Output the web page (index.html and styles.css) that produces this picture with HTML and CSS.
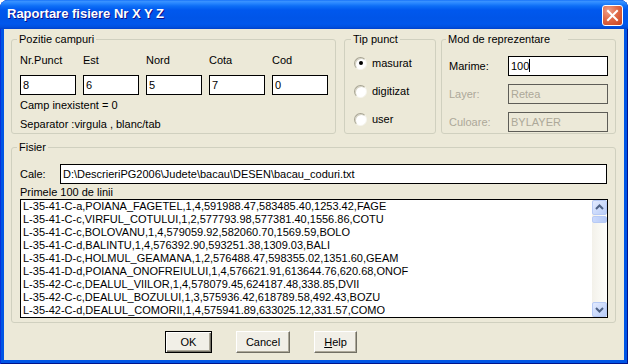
FILE: index.html
```html
<!DOCTYPE html>
<html lang="ro">
<head>
    <meta charset="UTF-8">
    <title>Raportare fisiere Nr X Y Z</title>
    <link rel="stylesheet" href="styles.css">
</head>
<body>
    <div class="window">
        <div class="titlebar">
            <span class="title">Raportare fisiere Nr X Y Z</span>
            <div class="close">
                <svg width="19" height="19" viewBox="0 0 19 19">
                    <path d="M5 5 L14 14 M14 5 L5 14" stroke="#fff" stroke-width="2" stroke-linecap="square"/>
                </svg>
            </div>
        </div>

        <div class="client">
            <div class="top-row">
                <fieldset class="group pozitie">
                    <legend>Pozitie campuri</legend>
                    <div class="fields">
                        <div class="field"><span>Nr.Punct</span><div class="edit">8</div></div>
                        <div class="field"><span>Est</span><div class="edit">6</div></div>
                        <div class="field"><span>Nord</span><div class="edit">5</div></div>
                        <div class="field"><span>Cota</span><div class="edit">7</div></div>
                        <div class="field"><span>Cod</span><div class="edit">0</div></div>
                    </div>
                    <p class="note">Camp inexistent = 0</p>
                    <p class="note second">Separator :virgula , blanc/tab</p>
                </fieldset>

                <fieldset class="group tip">
                    <legend>Tip punct</legend>
                    <div class="radio-row"><span class="radio checked"></span>masurat</div>
                    <div class="radio-row"><span class="radio"></span>digitizat</div>
                    <div class="radio-row"><span class="radio"></span>user</div>
                </fieldset>

                <fieldset class="group mod">
                    <legend class="wide">Mod de reprezentare</legend>
                    <div class="row"><span class="row-label">Marime:</span><div class="edit wide-edit">100<span class="caret"></span></div></div>
                    <div class="row disabled"><span class="row-label">Layer:</span><div class="edit wide-edit">Retea</div></div>
                    <div class="row disabled"><span class="row-label">Culoare:</span><div class="edit wide-edit">BYLAYER</div></div>
                </fieldset>
            </div>

            <fieldset class="group fisier">
                <legend>Fisier</legend>
                <div class="cale-row">
                    <span class="cale-label">Cale:</span>
                    <div class="edit cale-edit">D:\DescrieriPG2006\Judete\bacau\DESEN\bacau_coduri.txt</div>
                </div>
                <p class="list-title">Primele 100 de linii</p>
                <div class="list">
                    <div class="lines">
                        <div>L-35-41-C-a,POIANA_FAGETEL,1,4,591988.47,583485.40,1253.42,FAGE</div>
                        <div>L-35-41-C-c,VIRFUL_COTULUI,1,2,577793.98,577381.40,1556.86,COTU</div>
                        <div>L-35-41-C-c,BOLOVANU,1,4,579059.92,582060.70,1569.59,BOLO</div>
                        <div>L-35-41-C-d,BALINTU,1,4,576392.90,593251.38,1309.03,BALI</div>
                        <div>L-35-41-D-c,HOLMUL_GEAMANA,1,2,576488.47,598355.02,1351.60,GEAM</div>
                        <div>L-35-41-D-d,POIANA_ONOFREIULUI,1,4,576621.91,613644.76,620.68,ONOF</div>
                        <div>L-35-42-C-c,DEALUL_VIILOR,1,4,578079.45,624187.48,338.85,DVII</div>
                        <div>L-35-42-C-c,DEALUL_BOZULUI,1,3,575936.42,618789.58,492.43,BOZU</div>
                        <div>L-35-42-C-d,DEALUL_COMORII,1,4,575941.89,633025.12,331.57,COMO</div>
                    </div>
                    <div class="vscroll">
                        <div class="sbtn">
                            <svg width="13" height="13" viewBox="0 0 13 13"><polyline points="3,8 6.5,4.5 10,8" fill="none" stroke="#4D6185" stroke-width="2"/></svg>
                        </div>
                        <div class="thumb"></div>
                        <div class="track"></div>
                        <div class="sbtn">
                            <svg width="13" height="13" viewBox="0 0 13 13"><polyline points="3,5 6.5,8.5 10,5" fill="none" stroke="#4D6185" stroke-width="2"/></svg>
                        </div>
                    </div>
                </div>
            </fieldset>

            <div class="buttons">
                <div class="btn default ok">OK</div>
                <div class="btn cancel">Cancel</div>
                <div class="btn help"><u>H</u>elp</div>
            </div>
        </div>
    </div>
</body>
</html>
```

FILE: styles.css
```css
body {
    margin: 0;
    background: #fff;
    font-family: "Liberation Sans", Arial, sans-serif;
    font-size: 11px;
    color: #000;
}
.window {
    width: 628px;
    height: 364px;
    display: flex;
    flex-direction: column;
    background: #0055E5;
    border-radius: 8px 8px 0 0;
    box-shadow: inset 1px 0 #0831D9, inset -1px 0 #00138C, inset 0 -1px #00138C;
}
.titlebar {
    height: 29px;
    flex: none;
    display: flex;
    justify-content: space-between;
    align-items: flex-start;
    padding: 0 5px 0 7px;
    box-sizing: border-box;
    border-radius: 8px 8px 0 0;
    background: linear-gradient(180deg, #0A66F6 0px, #3C94FF 1px, #2A88FF 3px, #0D6EF6 6px, #0058EE 10px, #0055E8 18px, #0057EC 24px, #0050DF 27px, #0041CC 29px);
}
.title {
    margin-top: 6px;
    line-height: 16px;
    color: #fff;
    font: bold 13px "Liberation Sans Narrow", "Liberation Sans", sans-serif;
    text-shadow: 1px 1px #0F1089;
}
.close {
    width: 21px;
    height: 21px;
    margin-top: 5px;
    box-sizing: border-box;
    border: 1px solid #fff;
    border-radius: 3px;
    background: radial-gradient(circle at 30% 25%, #EFA08A 0, #E06A48 45%, #C8401D 100%);
    display: flex;
    align-items: center;
    justify-content: center;
}

.client {
    flex: 1;
    margin: 0 4px 4px;
    padding: 4px 8px 7px 7px;
    background: #ECE9D8;
    display: flex;
    flex-direction: column;
}
.group {
    margin: 0;
    border: 1px solid #D0D0BF;
    border-radius: 3px;
    min-width: 0;
    box-sizing: border-box;
}
.group legend {
    margin-left: -3px;
    padding: 0 2px;
    line-height: 13px;
}
.group legend.wide {
    padding-right: 18px;
}
.top-row {
    display: flex;
    height: 101px;
    flex: none;
}

/* Pozitie campuri */
.pozitie {
    width: 325px;
    padding: 8px 0 0 8px;
}
.fields {
    display: flex;
    gap: 7px;
}
.field {
    width: 56px;
    display: flex;
    flex-direction: column;
    gap: 8px;
    line-height: 13px;
}
.edit {
    height: 20px;
    box-sizing: border-box;
    border: 1px solid #000;
    background: #fff;
    padding: 0 2px;
    line-height: 18px;
    white-space: nowrap;
    overflow: hidden;
}
.note {
    margin: 4px 0 0;
    line-height: 13px;
}
.note.second {
    margin-top: 6px;
}

/* Tip punct */
.tip {
    width: 92px;
    margin-left: 8px;
    padding: 10px 0 0 9px;
}
.radio-row {
    height: 14px;
    display: flex;
    align-items: center;
    gap: 5px;
    margin-bottom: 14px;
}
.radio {
    width: 13px;
    height: 13px;
    box-sizing: border-box;
    border-radius: 50%;
    background: #fff;
    border: 1px solid;
    border-color: #A7A493 #F6F5EF #F6F5EF #A7A493;
    box-shadow: inset 1px 1px 0 #D6D3C4;
    display: flex;
    align-items: center;
    justify-content: center;
}
.radio.checked::after {
    content: "";
    width: 4px;
    height: 4px;
    border-radius: 50%;
    background: #000;
}

/* Mod de reprezentare */
.mod {
    width: 175px;
    margin-left: 5px;
    padding: 10px 0 0 7px;
}
.row {
    display: flex;
    align-items: center;
    height: 20px;
    margin-bottom: 8px;
}
.row-label {
    width: 59px;
}
.wide-edit {
    width: 100px;
}
.caret {
    display: inline-block;
    width: 1px;
    height: 13px;
    background: #000;
    vertical-align: -2px;
}
.row.disabled {
    color: #ACA899;
}
.row.disabled .edit {
    background: #ECE9D8;
    border-color: #5E5D57;
}

/* Fisier */
.fisier {
    flex: 1;
    margin-top: 7px;
    padding: 10px 7px 4px 8px;
}
.cale-row {
    display: flex;
    align-items: center;
    height: 20px;
}
.cale-label {
    width: 40px;
}
.cale-edit {
    width: 547px;
}
.list-title {
    margin: 2px 0 0;
    line-height: 13px;
}
.list {
    height: 119px;
    width: 588px;
    box-sizing: border-box;
    border: 1px solid #000;
    background: #fff;
    display: flex;
}
.lines {
    flex: 1;
    padding-left: 2px;
    line-height: 13px;
    white-space: nowrap;
    overflow: hidden;
}
.vscroll {
    width: 15px;
    display: flex;
    flex-direction: column;
    background: linear-gradient(90deg, #F3F1EA, #FEFEFB);
}
.sbtn {
    height: 15px;
    box-sizing: border-box;
    border: 1px solid #B7CAF5;
    border-radius: 2px;
    background: linear-gradient(135deg, #E2EAFE, #B9CDF8);
    display: flex;
    align-items: center;
    justify-content: center;
}
.thumb {
    height: 7px;
    margin-top: 1px;
    box-sizing: border-box;
    border: 1px solid #B7CAF5;
    border-radius: 2px;
    background: linear-gradient(90deg, #CAD9FC, #B5C9F6);
}
.track {
    flex: 1;
}

/* Buttons */
.buttons {
    display: flex;
    gap: 24px;
    margin-top: 8px;
    padding-left: 154px;
    flex: none;
}
.btn {
    height: 22px;
    box-sizing: border-box;
    display: flex;
    align-items: center;
    justify-content: center;
    background: #F1EFE7;
    border: 1px solid;
    border-color: #fff #716F64 #716F64 #fff;
    box-shadow: inset -1px -1px #ACA899;
}
.btn.default {
    border-color: #000;
    box-shadow: inset 1px 1px #fff, inset -1px -1px #716F64, inset -2px -2px #ACA899;
}
.ok {
    width: 47px;
}
.cancel {
    width: 54px;
}
.help {
    width: 43px;
}
```
